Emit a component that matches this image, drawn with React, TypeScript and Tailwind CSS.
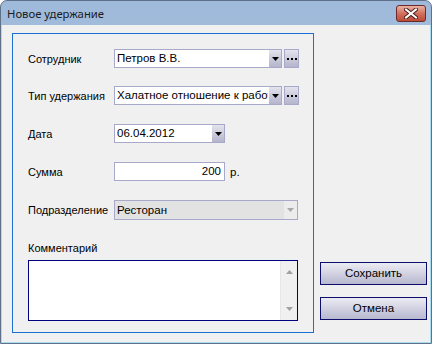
import React from "react";

const font = { fontFamily: '"Liberation Sans", Arial, sans-serif' };

function Arrow({ disabled = false }: { disabled?: boolean }) {
  return (
    <svg width="7" height="4" viewBox="0 0 7 4">
      <path d="M0 0 H7 L3.5 4 Z" fill={disabled ? "#a8a8a8" : "#000"} />
    </svg>
  );
}

function DropBtn() {
  return (
    <div className="w-[13px] h-full flex items-center justify-center bg-gradient-to-b from-[#e4e4ee] to-[#b4b4cc] border-l border-white">
      <Arrow />
    </div>
  );
}

function Ellipsis() {
  return (
    <div className="w-[15px] h-[19px] ml-[2px] flex items-center justify-center gap-[2px] bg-gradient-to-b from-[#e4e4ee] to-[#b4b4cc] border border-[#a8a8c8]">
      <span className="w-[2px] h-[2px] bg-black" />
      <span className="w-[2px] h-[2px] bg-black" />
      <span className="w-[2px] h-[2px] bg-black" />
    </div>
  );
}

function Label({ children }: { children: React.ReactNode }) {
  return <div className="w-[86px] shrink-0 text-[11px] text-black leading-[14px] whitespace-nowrap">{children}</div>;
}

export default function App() {
  return (
    <div className="w-[432px] h-[344px] bg-white" style={font}>
      <div className="w-[432px] h-[344px] rounded-t-[7px] border border-[#5f7189] bg-gradient-to-b from-[#9fb9da] to-[#bed5ec] flex flex-col overflow-hidden">
        {/* Title bar */}
        <div className="h-[24px] shrink-0 flex items-start relative">
          <div className="pl-[6px] pt-[5px] text-[11.3px] leading-[16px] text-[#1b1b1b]" style={{ fontFamily: '"Noto Sans", "DejaVu Sans", sans-serif' }}>Новое удержание</div>
          <div className="absolute left-[395px] top-[4px] w-[30px] h-[17px] rounded-[3px] border border-[#6b2b2b] bg-gradient-to-b from-[#eab2a4] via-[#d2705e] to-[#bb4a36] flex items-center justify-center">
            <svg width="14" height="11" viewBox="0 0 14 11">
              <path d="M2 1.5 L12 9.5 M12 1.5 L2 9.5" stroke="#4a1a1a" strokeWidth="4" strokeLinecap="square" />
              <path d="M2 1.5 L12 9.5 M12 1.5 L2 9.5" stroke="#ffffff" strokeWidth="2" strokeLinecap="square" />
            </svg>
          </div>
        </div>
        {/* Content */}
        <div className="flex-1 border-x border-b border-[#a9dcf2] bg-[#f0f0f0] flex pl-[10px] pt-[8px]">
          {/* Group box */}
          <div className="w-[302px] h-[300px] border border-[#1a6fd2] pl-[15px] pt-[15px] flex flex-col">
            <div className="flex items-center h-[19px]">
              <Label>Сотрудник</Label>
              <div className="w-[168px] h-[19px] border border-[#a8a8c8] bg-white flex">
                <div className="flex-1 pl-[2px] text-[11.5px] leading-[17px] text-black overflow-hidden whitespace-nowrap">Петров В.В.</div>
                <DropBtn />
              </div>
              <Ellipsis />
            </div>
            <div className="flex items-center h-[19px] mt-[18px]">
              <Label>Тип удержания</Label>
              <div className="w-[168px] h-[19px] border border-[#a8a8c8] bg-white flex">
                <div className="flex-1 min-w-0 pl-[2px] text-[11.5px] leading-[17px] text-black overflow-hidden whitespace-nowrap">Халатное отношение к работе</div>
                <DropBtn />
              </div>
              <Ellipsis />
            </div>
            <div className="flex items-center h-[19px] mt-[19px]">
              <Label>Дата</Label>
              <div className="w-[111px] h-[19px] border border-[#a8a8c8] bg-white flex">
                <div className="flex-1 pl-[2px] text-[11.5px] leading-[17px] text-black">06.04.2012</div>
                <DropBtn />
              </div>
            </div>
            <div className="flex items-center h-[19px] mt-[19px]">
              <Label>Сумма</Label>
              <div className="w-[111px] h-[19px] border border-[#a8a8c8] bg-white pr-[3px] text-right text-[11.5px] leading-[17px] text-black">200</div>
              <div className="ml-[5px] text-[11.5px] leading-[14px] text-black">р.</div>
            </div>
            <div className="flex items-center h-[20px] mt-[19px]">
              <Label>Подразделение</Label>
              <div className="w-[184px] h-[20px] border border-[#a8a8c8] bg-[#e2e2e2] flex">
                <div className="flex-1 pl-[2px] text-[11.5px] leading-[18px] text-black">Ресторан</div>
                <div className="w-[13px] h-full flex items-center justify-center bg-[#ececec]">
                  <Arrow disabled />
                </div>
              </div>
            </div>
            <div className="mt-[21px] text-[11px] leading-[14px] text-black">Комментарий</div>
            <div className="mt-[5px] w-[270px] h-[61px] border border-[#000080] bg-white flex justify-end">
              <div className="w-[17px] h-full bg-[#f0f0f0] border-l border-[#e6e6e6] flex flex-col items-center justify-between py-[9px]">
                <svg width="7" height="4" viewBox="0 0 7 4"><path d="M0 4 H7 L3.5 0 Z" fill="#a0a0a0" /></svg>
                <svg width="7" height="4" viewBox="0 0 7 4"><path d="M0 0 H7 L3.5 4 Z" fill="#a0a0a0" /></svg>
              </div>
            </div>
          </div>
          {/* Buttons */}
          <div className="ml-[6px] pt-[229px] flex flex-col gap-[12px]">
            <div className="w-[107px] h-[23px] border border-[#0d0d6b] bg-gradient-to-b from-[#ececf4] to-[#b8b8d0] flex items-center justify-center text-[11.5px] text-black">Сохранить</div>
            <div className="w-[107px] h-[23px] border border-[#0d0d6b] bg-gradient-to-b from-[#ececf4] to-[#b8b8d0] flex items-center justify-center text-[11.5px] text-black">Отмена</div>
          </div>
        </div>
      </div>
    </div>
  );
}
